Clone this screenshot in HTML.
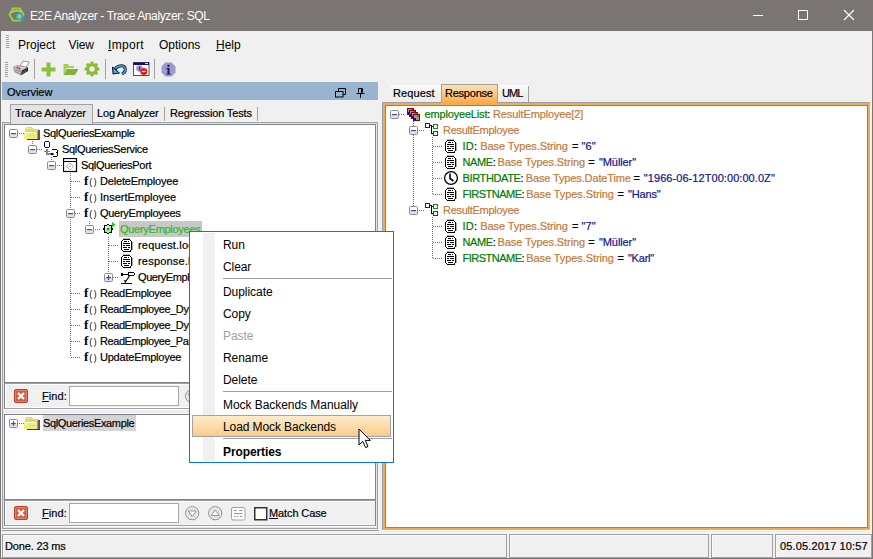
<!DOCTYPE html><html><head><meta charset="utf-8"><style>
html,body{margin:0;padding:0;}
body{width:873px;height:559px;position:relative;overflow:hidden;background:#f0f0f0;font-family:"Liberation Sans",sans-serif;}
body div, body svg{position:absolute;}
.t11{font-size:11px;line-height:16px;white-space:pre;color:#000;-webkit-text-stroke:0.2px currentColor;}
.t12{font-size:12px;line-height:16px;white-space:pre;color:#000;}
.u{text-decoration:underline;}
</style></head><body>
<div style="left:0px;top:0px;width:873px;height:31px;background:#7a7472"></div>
<svg style="left:8px;top:7px;" width="18" height="16" viewBox="0 0 18 16"><path d="M5 1.5 L12 1.5 L15.5 7.5 L12 13.5 L5 13.5 L1.5 7.5 Z" fill="none" stroke="#9bcf3a" stroke-width="2"/>
<path d="M3 6 Q8 2 13 5" fill="none" stroke="#b6d84a" stroke-width="1.5"/>
<circle cx="11.5" cy="9.5" r="3" fill="#a8d040" stroke="#2aa0e0" stroke-width="1.6"/>
<path d="M13.6 11.6 L16 14" stroke="#2aa0e0" stroke-width="1.8"/></svg>
<div class="t12" style="left:30px;top:1px;color:#fff;line-height:31px;letter-spacing:-0.39px;">E2E Analyzer - Trace Analyzer: SQL</div>
<div style="left:753px;top:15px;width:10px;height:1px;background:#fff"></div>
<div style="left:798px;top:10px;width:8px;height:8px;border:1px solid #fff"></div>
<svg style="left:843px;top:9px;" width="12" height="12" viewBox="0 0 12 12"><path d="M1 1 L11 11 M11 1 L1 11" stroke="#fff" stroke-width="1.1"/></svg>
<div style="left:0px;top:31px;width:1px;height:528px;background:#7a7472"></div>
<div style="left:872px;top:31px;width:1px;height:528px;background:#7a7472"></div>
<div style="left:0px;top:558px;width:873px;height:1px;background:#7a7472"></div>
<div style="left:6px;top:35px;width:3px;height:1px;background:#a89ca8"></div>
<div style="left:6px;top:37px;width:3px;height:1px;background:#a89ca8"></div>
<div style="left:6px;top:39px;width:3px;height:1px;background:#a89ca8"></div>
<div style="left:6px;top:41px;width:3px;height:1px;background:#a89ca8"></div>
<div style="left:6px;top:43px;width:3px;height:1px;background:#a89ca8"></div>
<div style="left:6px;top:45px;width:3px;height:1px;background:#a89ca8"></div>
<div style="left:6px;top:47px;width:3px;height:1px;background:#a89ca8"></div>
<div class="t12" style="left:18px;top:37px;letter-spacing:0px;">Project</div>
<div class="t12" style="left:68.5px;top:37px;letter-spacing:-0.1px;">View</div>
<div class="t12" style="left:108px;top:37px;letter-spacing:0.3px;"><span class="u">I</span>mport</div>
<div class="t12" style="left:159px;top:37px;letter-spacing:0px;">Options</div>
<div class="t12" style="left:216px;top:37px;letter-spacing:0px;"><span class="u">H</span>elp</div>
<div style="left:5px;top:62px;width:3px;height:1px;background:#a89ca8"></div>
<div style="left:5px;top:64px;width:3px;height:1px;background:#a89ca8"></div>
<div style="left:5px;top:66px;width:3px;height:1px;background:#a89ca8"></div>
<div style="left:5px;top:68px;width:3px;height:1px;background:#a89ca8"></div>
<div style="left:5px;top:70px;width:3px;height:1px;background:#a89ca8"></div>
<div style="left:5px;top:72px;width:3px;height:1px;background:#a89ca8"></div>
<div style="left:5px;top:74px;width:3px;height:1px;background:#a89ca8"></div>
<div style="left:5px;top:76px;width:3px;height:1px;background:#a89ca8"></div>
<div style="left:34px;top:59px;width:1px;height:20px;background:#a0a0a0"></div>
<div style="left:105px;top:59px;width:1px;height:20px;background:#a0a0a0"></div>
<div style="left:154px;top:59px;width:1px;height:20px;background:#a0a0a0"></div>
<svg style="left:10px;top:58px;" width="22" height="22" viewBox="0 0 22 22"><path d="M13 3 L19 4 L16 9.5 L10 8.5 Z" fill="#fff" stroke="#8a8a8a" stroke-width="0.9"/>
<path d="M3 9.5 L8 7.5 L18 9.5 L12 12.5 Z" fill="#d6d6d6" stroke="#8a8a8a" stroke-width="0.8"/>
<path d="M3 9.5 L12 12.5 L10.5 17.5 L4 14 Z" fill="#bcbcbc"/>
<path d="M4 11.5 L11 14 M4.5 13.5 L10.5 16" stroke="#8a8a8a" stroke-width="0.9"/>
<path d="M12 12.5 L18 9.5 L18 13 L10.5 17.5 Z" fill="#111"/>
<path d="M11.5 14.5 L17.5 11 M11 16 L17 12.5" stroke="#777" stroke-width="0.7"/>
<circle cx="7.5" cy="9.5" r="0.9" fill="#f01010"/><circle cx="9.5" cy="10.5" r="0.9" fill="#f01010"/></svg>
<svg style="left:41px;top:62px;" width="15" height="15" viewBox="0 0 15 15"><path d="M5.5 0.5 h4 v5 h5 v4 h-5 v5 h-4 v-5 h-5 v-4 h5 z" fill="#8cbf3c"/></svg>
<svg style="left:63px;top:63px;" width="16" height="13" viewBox="0 0 16 13"><path d="M0.5 1 L5 1 L6 3 L11 3 L11 5 L4 5 L0.5 12 Z" fill="#a9cf4e"/>
<path d="M4 6 L15.5 6 L12 12 L0.5 12 Z" fill="#7fb23a"/></svg>
<svg style="left:84px;top:61px;" width="17" height="17" viewBox="0 0 17 17"><g fill="#8cbb36"><circle cx="8" cy="8" r="5.8"/>
<rect x="6.3" y="0.6" width="3.4" height="14.8" rx="1.2"/><rect x="0.6" y="6.3" width="14.8" height="3.4" rx="1.2"/>
<rect x="6.3" y="0.6" width="3.4" height="14.8" rx="1.2" transform="rotate(45 8 8)"/><rect x="6.3" y="0.6" width="3.4" height="14.8" rx="1.2" transform="rotate(-45 8 8)"/></g>
<circle cx="8" cy="8" r="2.7" fill="#f0f0f0"/></svg>
<svg style="left:112px;top:63px;" width="15" height="12" viewBox="0 0 15 12"><path d="M3 9 C2 3 11 1 13 5 C14 8 12 10 10 11" fill="none" stroke="#111" stroke-width="3"/>
<path d="M3 9 C2 3 11 1 13 5 C14 8 12 10 10 11" fill="none" stroke="#39a8f0" stroke-width="1.5"/>
<path d="M0.5 4 L1 11 L7.5 10 Z" fill="#39a8f0" stroke="#111" stroke-width="1"/></svg>
<svg style="left:133px;top:62px;" width="17" height="14" viewBox="0 0 17 14"><rect x="0.5" y="0.5" width="15.5" height="13" fill="#fff" stroke="#555"/>
<rect x="0.5" y="0.5" width="15.5" height="2.5" fill="#101060"/>
<rect x="12" y="1.2" width="3" height="0.8" fill="#fff"/>
<circle cx="6.5" cy="6.5" r="3.3" fill="#9a9ad0"/>
<rect x="6" y="4.5" width="1.2" height="4" fill="#303070"/>
<circle cx="10.8" cy="9.5" r="3.5" fill="#e01818"/>
<path d="M9 9.5 h3.6" stroke="#fff" stroke-width="1.2"/></svg>
<svg style="left:161px;top:62px;" width="15" height="15" viewBox="0 0 15 15"><path d="M4.4 0.5 L10.6 0.5 L14.5 4.4 L14.5 10.6 L10.6 14.5 L4.4 14.5 L0.5 10.6 L0.5 4.4 Z" fill="#9b9bcd"/>
<rect x="6.5" y="2.8" width="2" height="2" fill="#1a1a50"/>
<path d="M5.5 6 h3 v5.5 h1 v1 h-4 v-1 h1 v-4.5 h-1 z" fill="#1a1a50"/></svg>
<div style="left:2px;top:82px;width:376px;height:18px;background:#99b4d1"></div>
<div class="t11" style="left:7px;top:84px;letter-spacing:-0.07px;">Overview</div>
<svg style="left:335px;top:88px;" width="11" height="10" viewBox="0 0 11 10"><path d="M3.5 3 V0.5 H10.5 V6.5 H8" fill="none" stroke="#000" stroke-width="1"/><rect x="0.5" y="3.5" width="7.5" height="5.5" fill="none" stroke="#000" stroke-width="1"/></svg>
<svg style="left:356px;top:88px;" width="9" height="10" viewBox="0 0 9 10"><path d="M2.5 0.5 H6.5 V4.5 M2.5 0.5 V4.5" fill="none" stroke="#000"/><path d="M0.5 5.5 H8.5" stroke="#000"/><path d="M4.5 5.5 V10" stroke="#000"/><rect x="5" y="1" width="1" height="4" fill="#000"/></svg>
<div class="t11" style="left:97px;top:105px;letter-spacing:-0.18px;">Log Analyzer</div>
<div style="left:164px;top:107px;width:1px;height:15px;background:#a0a0a0"></div>
<div class="t11" style="left:170px;top:105px;letter-spacing:-0.15px;">Regression Tests</div>
<div style="left:257px;top:107px;width:1px;height:15px;background:#a0a0a0"></div>
<div style="left:1px;top:121px;width:378px;height:409px;background:#f4f4f4"></div>
<div style="left:2px;top:122px;width:374px;height:405px;background:#e3e3e3;border:1px solid #a0a0a0"></div>
<div style="left:10px;top:104px;width:81px;height:19px;background:#e3e3e3;border:1px solid #a0a0a0;border-bottom:none"></div>
<div class="t11" style="left:15px;top:105px;letter-spacing:-0.154px;">Trace Analyzer</div>
<div style="left:4px;top:124px;width:372px;height:285px;background:#f0f0f0;border-left:1px solid #7d8593;border-top:1px solid #7d8593;border-right:1px solid #7d8593;border-bottom:1px solid #a0a0a0;box-sizing:border-box"></div>
<div style="left:5px;top:125px;width:370px;height:257px;background:#fff"></div>
<div style="left:5px;top:382px;width:370px;height:1px;background:#7d8593"></div>
<div style="left:5px;top:383px;width:370px;height:1px;background:#a0a0a0"></div>
<div style="left:5px;top:384px;width:370px;height:1px;background:#fff"></div>
<div style="left:5px;top:384px;width:1px;height:24px;background:#fff"></div>
<div style="left:5px;top:407px;width:370px;height:1px;background:#fff"></div>
<div style="left:4px;top:409px;width:372px;height:5px;background:#eeeeee"></div>
<div style="left:4px;top:409px;width:372px;height:1px;background:#fff"></div>
<div style="left:4px;top:413px;width:372px;height:1px;background:#f5f5f5"></div>
<div style="left:4px;top:414px;width:372px;height:112px;background:#f0f0f0;border-left:1px solid #7d8593;border-top:1px solid #7d8593;border-right:1px solid #7d8593;border-bottom:1px solid #a0a0a0;box-sizing:border-box"></div>
<div style="left:5px;top:415px;width:370px;height:84px;background:#fff"></div>
<div style="left:5px;top:499px;width:370px;height:1px;background:#7d8593"></div>
<div style="left:5px;top:500px;width:370px;height:1px;background:#a0a0a0"></div>
<div style="left:5px;top:501px;width:370px;height:1px;background:#fff"></div>
<div style="left:5px;top:501px;width:1px;height:24px;background:#fff"></div>
<div style="left:5px;top:524px;width:370px;height:1px;background:#f5f5f5"></div>
<div style="left:4px;top:526px;width:372px;height:1px;background:#fff"></div>
<div style="left:3px;top:527px;width:374px;height:1px;background:#e8e8e8"></div>
<div style="left:2px;top:530px;width:377px;height:1px;background:#a0a0a0"></div>
<div style="left:382px;top:102px;width:488px;height:428px;background:#fff"></div>
<div style="left:382px;top:102px;width:488px;height:1px;background:#9aa0a8"></div>
<div style="left:382px;top:102px;width:1px;height:428px;background:#9aa0a8"></div>
<div style="left:383px;top:103px;width:487px;height:427px;background:#f9a94a"></div>
<div style="left:385px;top:105px;width:483px;height:423px;background:#fff;border:1px solid #7d8593;box-sizing:border-box"></div>
<div style="left:870px;top:102px;width:1px;height:429px;background:#fff"></div>
<div style="left:382px;top:530px;width:489px;height:1px;background:#fff"></div>
<div style="left:391px;top:85px;width:50px;height:17px;background:linear-gradient(#fcfcfc,#f0f0f0 45%,#ececec)"></div>
<div class="t11" style="left:393px;top:84px;letter-spacing:0.1px;line-height:18px;">Request</div>
<div style="left:441px;top:84px;width:57px;height:19px;background:linear-gradient(#fde2b6,#f9b45c 85%,#f9a94a);border-left:1px solid #a0a0a0;border-top:1px solid #a0a0a0;border-right:1px solid #a0a0a0;box-sizing:border-box"></div>
<div class="t11" style="left:445px;top:84px;letter-spacing:-0.23px;line-height:18px;">Response</div>
<div style="left:498px;top:85px;width:31px;height:17px;background:linear-gradient(#fcfcfc,#f0f0f0 45%,#ececec)"></div>
<div class="t11" style="left:502px;top:84px;letter-spacing:-0.9px;line-height:18px;">UML</div>
<div style="left:528px;top:86px;width:1px;height:16px;background:#a0a0a0"></div>
<div style="left:382px;top:102px;width:59px;height:1px;background:#9aa0a8"></div>
<svg style="left:32px;top:140px;" width="1" height="9" viewBox="0 0 1 9"><rect x="0" y="1" width="1" height="1" fill="#6e6e6e"/><rect x="0" y="3" width="1" height="1" fill="#6e6e6e"/><rect x="0" y="5" width="1" height="1" fill="#6e6e6e"/><rect x="0" y="7" width="1" height="1" fill="#6e6e6e"/></svg>
<svg style="left:51px;top:156px;" width="1" height="9" viewBox="0 0 1 9"><rect x="0" y="1" width="1" height="1" fill="#6e6e6e"/><rect x="0" y="3" width="1" height="1" fill="#6e6e6e"/><rect x="0" y="5" width="1" height="1" fill="#6e6e6e"/><rect x="0" y="7" width="1" height="1" fill="#6e6e6e"/></svg>
<svg style="left:70px;top:172px;" width="1" height="185" viewBox="0 0 1 185"><rect x="0" y="1" width="1" height="1" fill="#6e6e6e"/><rect x="0" y="3" width="1" height="1" fill="#6e6e6e"/><rect x="0" y="5" width="1" height="1" fill="#6e6e6e"/><rect x="0" y="7" width="1" height="1" fill="#6e6e6e"/><rect x="0" y="9" width="1" height="1" fill="#6e6e6e"/><rect x="0" y="11" width="1" height="1" fill="#6e6e6e"/><rect x="0" y="13" width="1" height="1" fill="#6e6e6e"/><rect x="0" y="15" width="1" height="1" fill="#6e6e6e"/><rect x="0" y="17" width="1" height="1" fill="#6e6e6e"/><rect x="0" y="19" width="1" height="1" fill="#6e6e6e"/><rect x="0" y="21" width="1" height="1" fill="#6e6e6e"/><rect x="0" y="23" width="1" height="1" fill="#6e6e6e"/><rect x="0" y="25" width="1" height="1" fill="#6e6e6e"/><rect x="0" y="27" width="1" height="1" fill="#6e6e6e"/><rect x="0" y="29" width="1" height="1" fill="#6e6e6e"/><rect x="0" y="31" width="1" height="1" fill="#6e6e6e"/><rect x="0" y="33" width="1" height="1" fill="#6e6e6e"/><rect x="0" y="35" width="1" height="1" fill="#6e6e6e"/><rect x="0" y="37" width="1" height="1" fill="#6e6e6e"/><rect x="0" y="39" width="1" height="1" fill="#6e6e6e"/><rect x="0" y="41" width="1" height="1" fill="#6e6e6e"/><rect x="0" y="43" width="1" height="1" fill="#6e6e6e"/><rect x="0" y="45" width="1" height="1" fill="#6e6e6e"/><rect x="0" y="47" width="1" height="1" fill="#6e6e6e"/><rect x="0" y="49" width="1" height="1" fill="#6e6e6e"/><rect x="0" y="51" width="1" height="1" fill="#6e6e6e"/><rect x="0" y="53" width="1" height="1" fill="#6e6e6e"/><rect x="0" y="55" width="1" height="1" fill="#6e6e6e"/><rect x="0" y="57" width="1" height="1" fill="#6e6e6e"/><rect x="0" y="59" width="1" height="1" fill="#6e6e6e"/><rect x="0" y="61" width="1" height="1" fill="#6e6e6e"/><rect x="0" y="63" width="1" height="1" fill="#6e6e6e"/><rect x="0" y="65" width="1" height="1" fill="#6e6e6e"/><rect x="0" y="67" width="1" height="1" fill="#6e6e6e"/><rect x="0" y="69" width="1" height="1" fill="#6e6e6e"/><rect x="0" y="71" width="1" height="1" fill="#6e6e6e"/><rect x="0" y="73" width="1" height="1" fill="#6e6e6e"/><rect x="0" y="75" width="1" height="1" fill="#6e6e6e"/><rect x="0" y="77" width="1" height="1" fill="#6e6e6e"/><rect x="0" y="79" width="1" height="1" fill="#6e6e6e"/><rect x="0" y="81" width="1" height="1" fill="#6e6e6e"/><rect x="0" y="83" width="1" height="1" fill="#6e6e6e"/><rect x="0" y="85" width="1" height="1" fill="#6e6e6e"/><rect x="0" y="87" width="1" height="1" fill="#6e6e6e"/><rect x="0" y="89" width="1" height="1" fill="#6e6e6e"/><rect x="0" y="91" width="1" height="1" fill="#6e6e6e"/><rect x="0" y="93" width="1" height="1" fill="#6e6e6e"/><rect x="0" y="95" width="1" height="1" fill="#6e6e6e"/><rect x="0" y="97" width="1" height="1" fill="#6e6e6e"/><rect x="0" y="99" width="1" height="1" fill="#6e6e6e"/><rect x="0" y="101" width="1" height="1" fill="#6e6e6e"/><rect x="0" y="103" width="1" height="1" fill="#6e6e6e"/><rect x="0" y="105" width="1" height="1" fill="#6e6e6e"/><rect x="0" y="107" width="1" height="1" fill="#6e6e6e"/><rect x="0" y="109" width="1" height="1" fill="#6e6e6e"/><rect x="0" y="111" width="1" height="1" fill="#6e6e6e"/><rect x="0" y="113" width="1" height="1" fill="#6e6e6e"/><rect x="0" y="115" width="1" height="1" fill="#6e6e6e"/><rect x="0" y="117" width="1" height="1" fill="#6e6e6e"/><rect x="0" y="119" width="1" height="1" fill="#6e6e6e"/><rect x="0" y="121" width="1" height="1" fill="#6e6e6e"/><rect x="0" y="123" width="1" height="1" fill="#6e6e6e"/><rect x="0" y="125" width="1" height="1" fill="#6e6e6e"/><rect x="0" y="127" width="1" height="1" fill="#6e6e6e"/><rect x="0" y="129" width="1" height="1" fill="#6e6e6e"/><rect x="0" y="131" width="1" height="1" fill="#6e6e6e"/><rect x="0" y="133" width="1" height="1" fill="#6e6e6e"/><rect x="0" y="135" width="1" height="1" fill="#6e6e6e"/><rect x="0" y="137" width="1" height="1" fill="#6e6e6e"/><rect x="0" y="139" width="1" height="1" fill="#6e6e6e"/><rect x="0" y="141" width="1" height="1" fill="#6e6e6e"/><rect x="0" y="143" width="1" height="1" fill="#6e6e6e"/><rect x="0" y="145" width="1" height="1" fill="#6e6e6e"/><rect x="0" y="147" width="1" height="1" fill="#6e6e6e"/><rect x="0" y="149" width="1" height="1" fill="#6e6e6e"/><rect x="0" y="151" width="1" height="1" fill="#6e6e6e"/><rect x="0" y="153" width="1" height="1" fill="#6e6e6e"/><rect x="0" y="155" width="1" height="1" fill="#6e6e6e"/><rect x="0" y="157" width="1" height="1" fill="#6e6e6e"/><rect x="0" y="159" width="1" height="1" fill="#6e6e6e"/><rect x="0" y="161" width="1" height="1" fill="#6e6e6e"/><rect x="0" y="163" width="1" height="1" fill="#6e6e6e"/><rect x="0" y="165" width="1" height="1" fill="#6e6e6e"/><rect x="0" y="167" width="1" height="1" fill="#6e6e6e"/><rect x="0" y="169" width="1" height="1" fill="#6e6e6e"/><rect x="0" y="171" width="1" height="1" fill="#6e6e6e"/><rect x="0" y="173" width="1" height="1" fill="#6e6e6e"/><rect x="0" y="175" width="1" height="1" fill="#6e6e6e"/><rect x="0" y="177" width="1" height="1" fill="#6e6e6e"/><rect x="0" y="179" width="1" height="1" fill="#6e6e6e"/><rect x="0" y="181" width="1" height="1" fill="#6e6e6e"/><rect x="0" y="183" width="1" height="1" fill="#6e6e6e"/></svg>
<svg style="left:89px;top:220px;" width="1" height="9" viewBox="0 0 1 9"><rect x="0" y="1" width="1" height="1" fill="#6e6e6e"/><rect x="0" y="3" width="1" height="1" fill="#6e6e6e"/><rect x="0" y="5" width="1" height="1" fill="#6e6e6e"/><rect x="0" y="7" width="1" height="1" fill="#6e6e6e"/></svg>
<svg style="left:108px;top:236px;" width="1" height="41" viewBox="0 0 1 41"><rect x="0" y="1" width="1" height="1" fill="#6e6e6e"/><rect x="0" y="3" width="1" height="1" fill="#6e6e6e"/><rect x="0" y="5" width="1" height="1" fill="#6e6e6e"/><rect x="0" y="7" width="1" height="1" fill="#6e6e6e"/><rect x="0" y="9" width="1" height="1" fill="#6e6e6e"/><rect x="0" y="11" width="1" height="1" fill="#6e6e6e"/><rect x="0" y="13" width="1" height="1" fill="#6e6e6e"/><rect x="0" y="15" width="1" height="1" fill="#6e6e6e"/><rect x="0" y="17" width="1" height="1" fill="#6e6e6e"/><rect x="0" y="19" width="1" height="1" fill="#6e6e6e"/><rect x="0" y="21" width="1" height="1" fill="#6e6e6e"/><rect x="0" y="23" width="1" height="1" fill="#6e6e6e"/><rect x="0" y="25" width="1" height="1" fill="#6e6e6e"/><rect x="0" y="27" width="1" height="1" fill="#6e6e6e"/><rect x="0" y="29" width="1" height="1" fill="#6e6e6e"/><rect x="0" y="31" width="1" height="1" fill="#6e6e6e"/><rect x="0" y="33" width="1" height="1" fill="#6e6e6e"/><rect x="0" y="35" width="1" height="1" fill="#6e6e6e"/><rect x="0" y="37" width="1" height="1" fill="#6e6e6e"/><rect x="0" y="39" width="1" height="1" fill="#6e6e6e"/></svg>
<svg style="left:14px;top:133px;" width="10" height="1" viewBox="0 0 10 1"><rect x="1" y="0" width="1" height="1" fill="#6e6e6e"/><rect x="3" y="0" width="1" height="1" fill="#6e6e6e"/><rect x="5" y="0" width="1" height="1" fill="#6e6e6e"/><rect x="7" y="0" width="1" height="1" fill="#6e6e6e"/><rect x="9" y="0" width="1" height="1" fill="#6e6e6e"/></svg>
<svg style="left:9px;top:129px;" width="9" height="9" viewBox="0 0 9 9"><g><rect x="0.5" y="0.5" width="8" height="8" rx="1.2" fill="#fff" stroke="#8a8a8a"/><rect x="1" y="4.5" width="7" height="3.5" fill="#e2e2e2"/><rect x="2" y="4" width="5" height="1.2" fill="#3a52b0"/></g></svg>
<svg style="left:33px;top:149px;" width="10" height="1" viewBox="0 0 10 1"><rect x="0" y="0" width="1" height="1" fill="#6e6e6e"/><rect x="2" y="0" width="1" height="1" fill="#6e6e6e"/><rect x="4" y="0" width="1" height="1" fill="#6e6e6e"/><rect x="6" y="0" width="1" height="1" fill="#6e6e6e"/><rect x="8" y="0" width="1" height="1" fill="#6e6e6e"/></svg>
<svg style="left:28px;top:145px;" width="9" height="9" viewBox="0 0 9 9"><g><rect x="0.5" y="0.5" width="8" height="8" rx="1.2" fill="#fff" stroke="#8a8a8a"/><rect x="1" y="4.5" width="7" height="3.5" fill="#e2e2e2"/><rect x="2" y="4" width="5" height="1.2" fill="#3a52b0"/></g></svg>
<svg style="left:52px;top:165px;" width="10" height="1" viewBox="0 0 10 1"><rect x="1" y="0" width="1" height="1" fill="#6e6e6e"/><rect x="3" y="0" width="1" height="1" fill="#6e6e6e"/><rect x="5" y="0" width="1" height="1" fill="#6e6e6e"/><rect x="7" y="0" width="1" height="1" fill="#6e6e6e"/><rect x="9" y="0" width="1" height="1" fill="#6e6e6e"/></svg>
<svg style="left:47px;top:161px;" width="9" height="9" viewBox="0 0 9 9"><g><rect x="0.5" y="0.5" width="8" height="8" rx="1.2" fill="#fff" stroke="#8a8a8a"/><rect x="1" y="4.5" width="7" height="3.5" fill="#e2e2e2"/><rect x="2" y="4" width="5" height="1.2" fill="#3a52b0"/></g></svg>
<svg style="left:71px;top:181px;" width="10" height="1" viewBox="0 0 10 1"><rect x="0" y="0" width="1" height="1" fill="#6e6e6e"/><rect x="2" y="0" width="1" height="1" fill="#6e6e6e"/><rect x="4" y="0" width="1" height="1" fill="#6e6e6e"/><rect x="6" y="0" width="1" height="1" fill="#6e6e6e"/><rect x="8" y="0" width="1" height="1" fill="#6e6e6e"/></svg>
<svg style="left:71px;top:197px;" width="10" height="1" viewBox="0 0 10 1"><rect x="0" y="0" width="1" height="1" fill="#6e6e6e"/><rect x="2" y="0" width="1" height="1" fill="#6e6e6e"/><rect x="4" y="0" width="1" height="1" fill="#6e6e6e"/><rect x="6" y="0" width="1" height="1" fill="#6e6e6e"/><rect x="8" y="0" width="1" height="1" fill="#6e6e6e"/></svg>
<svg style="left:71px;top:213px;" width="10" height="1" viewBox="0 0 10 1"><rect x="0" y="0" width="1" height="1" fill="#6e6e6e"/><rect x="2" y="0" width="1" height="1" fill="#6e6e6e"/><rect x="4" y="0" width="1" height="1" fill="#6e6e6e"/><rect x="6" y="0" width="1" height="1" fill="#6e6e6e"/><rect x="8" y="0" width="1" height="1" fill="#6e6e6e"/></svg>
<svg style="left:66px;top:209px;" width="9" height="9" viewBox="0 0 9 9"><g><rect x="0.5" y="0.5" width="8" height="8" rx="1.2" fill="#fff" stroke="#8a8a8a"/><rect x="1" y="4.5" width="7" height="3.5" fill="#e2e2e2"/><rect x="2" y="4" width="5" height="1.2" fill="#3a52b0"/></g></svg>
<svg style="left:90px;top:229px;" width="10" height="1" viewBox="0 0 10 1"><rect x="1" y="0" width="1" height="1" fill="#6e6e6e"/><rect x="3" y="0" width="1" height="1" fill="#6e6e6e"/><rect x="5" y="0" width="1" height="1" fill="#6e6e6e"/><rect x="7" y="0" width="1" height="1" fill="#6e6e6e"/><rect x="9" y="0" width="1" height="1" fill="#6e6e6e"/></svg>
<svg style="left:85px;top:225px;" width="9" height="9" viewBox="0 0 9 9"><g><rect x="0.5" y="0.5" width="8" height="8" rx="1.2" fill="#fff" stroke="#8a8a8a"/><rect x="1" y="4.5" width="7" height="3.5" fill="#e2e2e2"/><rect x="2" y="4" width="5" height="1.2" fill="#3a52b0"/></g></svg>
<svg style="left:109px;top:245px;" width="10" height="1" viewBox="0 0 10 1"><rect x="0" y="0" width="1" height="1" fill="#6e6e6e"/><rect x="2" y="0" width="1" height="1" fill="#6e6e6e"/><rect x="4" y="0" width="1" height="1" fill="#6e6e6e"/><rect x="6" y="0" width="1" height="1" fill="#6e6e6e"/><rect x="8" y="0" width="1" height="1" fill="#6e6e6e"/></svg>
<svg style="left:109px;top:261px;" width="10" height="1" viewBox="0 0 10 1"><rect x="0" y="0" width="1" height="1" fill="#6e6e6e"/><rect x="2" y="0" width="1" height="1" fill="#6e6e6e"/><rect x="4" y="0" width="1" height="1" fill="#6e6e6e"/><rect x="6" y="0" width="1" height="1" fill="#6e6e6e"/><rect x="8" y="0" width="1" height="1" fill="#6e6e6e"/></svg>
<svg style="left:109px;top:277px;" width="10" height="1" viewBox="0 0 10 1"><rect x="0" y="0" width="1" height="1" fill="#6e6e6e"/><rect x="2" y="0" width="1" height="1" fill="#6e6e6e"/><rect x="4" y="0" width="1" height="1" fill="#6e6e6e"/><rect x="6" y="0" width="1" height="1" fill="#6e6e6e"/><rect x="8" y="0" width="1" height="1" fill="#6e6e6e"/></svg>
<svg style="left:104px;top:273px;" width="9" height="9" viewBox="0 0 9 9"><g><rect x="0.5" y="0.5" width="8" height="8" rx="1.2" fill="#fff" stroke="#8a8a8a"/><rect x="1" y="4.5" width="7" height="3.5" fill="#e2e2e2"/><rect x="2" y="4" width="5" height="1.2" fill="#3a52b0"/></g><rect x="3.9" y="2" width="1.2" height="5" fill="#3a52b0"/></svg>
<svg style="left:71px;top:293px;" width="10" height="1" viewBox="0 0 10 1"><rect x="0" y="0" width="1" height="1" fill="#6e6e6e"/><rect x="2" y="0" width="1" height="1" fill="#6e6e6e"/><rect x="4" y="0" width="1" height="1" fill="#6e6e6e"/><rect x="6" y="0" width="1" height="1" fill="#6e6e6e"/><rect x="8" y="0" width="1" height="1" fill="#6e6e6e"/></svg>
<svg style="left:71px;top:309px;" width="10" height="1" viewBox="0 0 10 1"><rect x="0" y="0" width="1" height="1" fill="#6e6e6e"/><rect x="2" y="0" width="1" height="1" fill="#6e6e6e"/><rect x="4" y="0" width="1" height="1" fill="#6e6e6e"/><rect x="6" y="0" width="1" height="1" fill="#6e6e6e"/><rect x="8" y="0" width="1" height="1" fill="#6e6e6e"/></svg>
<svg style="left:71px;top:325px;" width="10" height="1" viewBox="0 0 10 1"><rect x="0" y="0" width="1" height="1" fill="#6e6e6e"/><rect x="2" y="0" width="1" height="1" fill="#6e6e6e"/><rect x="4" y="0" width="1" height="1" fill="#6e6e6e"/><rect x="6" y="0" width="1" height="1" fill="#6e6e6e"/><rect x="8" y="0" width="1" height="1" fill="#6e6e6e"/></svg>
<svg style="left:71px;top:341px;" width="10" height="1" viewBox="0 0 10 1"><rect x="0" y="0" width="1" height="1" fill="#6e6e6e"/><rect x="2" y="0" width="1" height="1" fill="#6e6e6e"/><rect x="4" y="0" width="1" height="1" fill="#6e6e6e"/><rect x="6" y="0" width="1" height="1" fill="#6e6e6e"/><rect x="8" y="0" width="1" height="1" fill="#6e6e6e"/></svg>
<svg style="left:71px;top:357px;" width="10" height="1" viewBox="0 0 10 1"><rect x="0" y="0" width="1" height="1" fill="#6e6e6e"/><rect x="2" y="0" width="1" height="1" fill="#6e6e6e"/><rect x="4" y="0" width="1" height="1" fill="#6e6e6e"/><rect x="6" y="0" width="1" height="1" fill="#6e6e6e"/><rect x="8" y="0" width="1" height="1" fill="#6e6e6e"/></svg>
<svg style="left:24px;top:127px;" width="17" height="14" viewBox="0 0 17 14"><g shape-rendering="crispEdges"><path d="M1 3 V1 L2 0 H7 L9 2 H15 V12 H1 Z" fill="#dedb6c"/><rect x="1" y="1" width="6" height="1" fill="#eeea90"/><rect x="0" y="5" width="14" height="7" fill="#efec7c"/><rect x="1" y="5" width="11" height="1" fill="#fbfbf0"/><rect x="1" y="6" width="1" height="5" fill="#f4f4d0"/><rect x="14" y="3" width="2" height="10" fill="#5a5a60"/><rect x="3" y="12" width="13" height="1" fill="#3a3a3a"/><rect x="13" y="4" width="1" height="8" fill="#a8a450"/><rect x="6" y="8" width="1" height="1" fill="#c8c460"/><rect x="9" y="8" width="1" height="1" fill="#c8c460"/></g></svg>
<div class="t11" style="left:43px;top:125px;letter-spacing:-0.33px;">SqlQueriesExample</div>
<svg style="left:43px;top:140px;" width="16" height="18" viewBox="0 0 16 18"><g shape-rendering="crispEdges"><g fill="#0000b0"><rect x="2" y="1" width="4" height="1"/><rect x="2" y="7" width="4" height="1"/><rect x="1" y="2" width="1" height="5"/><rect x="6" y="2" width="1" height="5"/></g><g fill="#858585"><rect x="1" y="11" width="6" height="1"/><rect x="3" y="9" width="2" height="6"/><rect x="3" y="13" width="8" height="2"/></g><g fill="#000"><rect x="8" y="13" width="2" height="2"/><rect x="9" y="9" width="5" height="1"/><rect x="14" y="10" width="1" height="6"/><rect x="13" y="12" width="1" height="1"/><rect x="10" y="16" width="4" height="1"/></g></g></svg>
<div class="t11" style="left:62px;top:141px;letter-spacing:-0.31px;">SqlQueriesService</div>
<svg style="left:63px;top:158px;" width="15" height="15" viewBox="0 0 15 15"><rect x="0.5" y="0.5" width="13" height="13" fill="#fff" stroke="#000" stroke-width="1.2"/><path d="M0.5 3.5 H13.5" stroke="#000" stroke-width="1"/><path d="M7 5 L10.5 8.5 L7 12 L3.5 8.5 Z" fill="none" stroke="#4040ff" stroke-width="0.8" stroke-dasharray="1 0.6"/><circle cx="7" cy="8.5" r="0.6" fill="#208020"/></svg>
<div class="t11" style="left:81px;top:157px;letter-spacing:-0.31px;">SqlQueriesPort</div>
<svg style="left:82px;top:175px;" width="15" height="12" viewBox="0 0 15 12"><g><text x="2" y="10" font-family="Liberation Serif" font-weight="bold" font-size="13">f</text><text x="7.3" y="10" font-family="Liberation Sans" font-size="8.5" letter-spacing="1.6">()</text></g></svg>
<div class="t11" style="left:100px;top:173px;letter-spacing:-0.185px;">DeleteEmployee</div>
<svg style="left:82px;top:191px;" width="15" height="12" viewBox="0 0 15 12"><g><text x="2" y="10" font-family="Liberation Serif" font-weight="bold" font-size="13">f</text><text x="7.3" y="10" font-family="Liberation Sans" font-size="8.5" letter-spacing="1.6">()</text></g></svg>
<div class="t11" style="left:100px;top:189px;letter-spacing:-0.015px;">InsertEmployee</div>
<svg style="left:82px;top:207px;" width="15" height="12" viewBox="0 0 15 12"><g><text x="2" y="10" font-family="Liberation Serif" font-weight="bold" font-size="13">f</text><text x="7.3" y="10" font-family="Liberation Sans" font-size="8.5" letter-spacing="1.6">()</text></g></svg>
<div class="t11" style="left:100px;top:205px;letter-spacing:-0.277px;">QueryEmployees</div>
<svg style="left:103px;top:222px;" width="14" height="12" viewBox="0 0 14 12"><g shape-rendering="crispEdges"><rect x="4" y="2" width="1" height="1" fill="#000"/><rect x="5" y="2" width="1" height="1" fill="#000"/><rect x="1" y="3" width="1" height="1" fill="#000"/><rect x="2" y="3" width="1" height="1" fill="#000"/><rect x="3" y="3" width="1" height="1" fill="#000"/><rect x="4" y="3" width="1" height="1" fill="#d4f7d4"/><rect x="5" y="3" width="1" height="1" fill="#d4f7d4"/><rect x="6" y="3" width="1" height="1" fill="#000"/><rect x="7" y="3" width="1" height="1" fill="#000"/><rect x="8" y="3" width="1" height="1" fill="#000"/><rect x="1" y="4" width="1" height="1" fill="#000"/><rect x="2" y="4" width="1" height="1" fill="#d4f7d4"/><rect x="3" y="4" width="1" height="1" fill="#d4f7d4"/><rect x="4" y="4" width="1" height="1" fill="#d4f7d4"/><rect x="5" y="4" width="1" height="1" fill="#d4f7d4"/><rect x="6" y="4" width="1" height="1" fill="#a6eaa6"/><rect x="7" y="4" width="1" height="1" fill="#a6eaa6"/><rect x="8" y="4" width="1" height="1" fill="#000"/><rect x="1" y="5" width="1" height="1" fill="#000"/><rect x="2" y="5" width="1" height="1" fill="#d4f7d4"/><rect x="3" y="5" width="1" height="1" fill="#d4f7d4"/><rect x="4" y="5" width="1" height="1" fill="#a6eaa6"/><rect x="5" y="5" width="1" height="1" fill="#a6eaa6"/><rect x="6" y="5" width="1" height="1" fill="#a6eaa6"/><rect x="7" y="5" width="1" height="1" fill="#a6eaa6"/><rect x="8" y="5" width="1" height="1" fill="#000"/><rect x="0" y="6" width="1" height="1" fill="#000"/><rect x="1" y="6" width="1" height="1" fill="#000"/><rect x="2" y="6" width="1" height="1" fill="#d4f7d4"/><rect x="3" y="6" width="1" height="1" fill="#d4f7d4"/><rect x="4" y="6" width="1" height="1" fill="#10a010"/><rect x="5" y="6" width="1" height="1" fill="#10a010"/><rect x="6" y="6" width="1" height="1" fill="#a6eaa6"/><rect x="7" y="6" width="1" height="1" fill="#a6eaa6"/><rect x="8" y="6" width="1" height="1" fill="#000"/><rect x="9" y="6" width="1" height="1" fill="#000"/><rect x="0" y="7" width="1" height="1" fill="#000"/><rect x="1" y="7" width="1" height="1" fill="#000"/><rect x="2" y="7" width="1" height="1" fill="#a6eaa6"/><rect x="3" y="7" width="1" height="1" fill="#a6eaa6"/><rect x="4" y="7" width="1" height="1" fill="#10a010"/><rect x="5" y="7" width="1" height="1" fill="#10a010"/><rect x="6" y="7" width="1" height="1" fill="#a6eaa6"/><rect x="7" y="7" width="1" height="1" fill="#a6eaa6"/><rect x="8" y="7" width="1" height="1" fill="#000"/><rect x="9" y="7" width="1" height="1" fill="#000"/><rect x="1" y="8" width="1" height="1" fill="#000"/><rect x="2" y="8" width="1" height="1" fill="#a6eaa6"/><rect x="3" y="8" width="1" height="1" fill="#a6eaa6"/><rect x="4" y="8" width="1" height="1" fill="#a6eaa6"/><rect x="5" y="8" width="1" height="1" fill="#a6eaa6"/><rect x="6" y="8" width="1" height="1" fill="#a6eaa6"/><rect x="7" y="8" width="1" height="1" fill="#a6eaa6"/><rect x="8" y="8" width="1" height="1" fill="#000"/><rect x="1" y="9" width="1" height="1" fill="#000"/><rect x="2" y="9" width="1" height="1" fill="#a6eaa6"/><rect x="3" y="9" width="1" height="1" fill="#a6eaa6"/><rect x="4" y="9" width="1" height="1" fill="#a6eaa6"/><rect x="5" y="9" width="1" height="1" fill="#a6eaa6"/><rect x="6" y="9" width="1" height="1" fill="#a6eaa6"/><rect x="7" y="9" width="1" height="1" fill="#a6eaa6"/><rect x="8" y="9" width="1" height="1" fill="#000"/><rect x="1" y="10" width="1" height="1" fill="#000"/><rect x="2" y="10" width="1" height="1" fill="#000"/><rect x="3" y="10" width="1" height="1" fill="#000"/><rect x="4" y="10" width="1" height="1" fill="#a6eaa6"/><rect x="5" y="10" width="1" height="1" fill="#a6eaa6"/><rect x="6" y="10" width="1" height="1" fill="#000"/><rect x="7" y="10" width="1" height="1" fill="#000"/><rect x="8" y="10" width="1" height="1" fill="#000"/><rect x="4" y="11" width="1" height="1" fill="#000"/><rect x="5" y="11" width="1" height="1" fill="#000"/></g><path d="M9 0 L12.5 2.5 L9 5.5 Z" fill="#10d010"/></svg>
<div style="left:119px;top:221px;width:83px;height:16px;background:#c8c8c8"></div>
<div class="t11" style="left:120px;top:221px;letter-spacing:-0.277px;color:#20c020;">QueryEmployees</div>
<svg style="left:121px;top:238px;" width="12" height="14" viewBox="0 0 12 14"><g shape-rendering="crispEdges" fill="#000"><rect x="2" y="1" width="7" height="1"/><rect x="2" y="0" width="7" height="1" fill="#bbb"/><rect x="1" y="2" width="1" height="1"/><rect x="9" y="2" width="1" height="1"/><rect x="0" y="3" width="1" height="9"/><rect x="10" y="3" width="1" height="9"/><rect x="11" y="4" width="1" height="8" fill="#aaa"/><rect x="1" y="12" width="1" height="1"/><rect x="9" y="12" width="1" height="1"/><rect x="2" y="13" width="8" height="1"/><rect x="3" y="3" width="3" height="1"/><rect x="7" y="3" width="1" height="1"/><rect x="2" y="5" width="7" height="1"/><rect x="2" y="7" width="2" height="1"/><rect x="5" y="7" width="4" height="1"/><rect x="2" y="9" width="4" height="1"/><rect x="7" y="9" width="2" height="1"/><rect x="3" y="11" width="5" height="1"/></g></svg>
<div class="t11" style="left:138px;top:237px;letter-spacing:0.2px;">request.log</div>
<svg style="left:121px;top:254px;" width="12" height="14" viewBox="0 0 12 14"><g shape-rendering="crispEdges" fill="#000"><rect x="2" y="1" width="7" height="1"/><rect x="2" y="0" width="7" height="1" fill="#bbb"/><rect x="1" y="2" width="1" height="1"/><rect x="9" y="2" width="1" height="1"/><rect x="0" y="3" width="1" height="9"/><rect x="10" y="3" width="1" height="9"/><rect x="11" y="4" width="1" height="8" fill="#aaa"/><rect x="1" y="12" width="1" height="1"/><rect x="9" y="12" width="1" height="1"/><rect x="2" y="13" width="8" height="1"/><rect x="3" y="3" width="3" height="1"/><rect x="7" y="3" width="1" height="1"/><rect x="2" y="5" width="7" height="1"/><rect x="2" y="7" width="2" height="1"/><rect x="5" y="7" width="4" height="1"/><rect x="2" y="9" width="4" height="1"/><rect x="7" y="9" width="2" height="1"/><rect x="3" y="11" width="5" height="1"/></g></svg>
<div class="t11" style="left:138px;top:253px;letter-spacing:0.2px;">response.log</div>
<svg style="left:121px;top:272px;" width="14" height="13" viewBox="0 0 14 13"><g shape-rendering="crispEdges" fill="#000"><rect x="0" y="1" width="2" height="3"/><rect x="2" y="2" width="5" height="1"/><rect x="7" y="0" width="6" height="1"/><rect x="7" y="3" width="6" height="1"/><rect x="7" y="1" width="1" height="2"/><rect x="13" y="1" width="1" height="2"/><rect x="0" y="11" width="11" height="1"/></g><path d="M8.5 4 L4 10.5" stroke="#000" stroke-width="1.2"/><path d="M3 8 L5.5 8.5 L4 11 Z" fill="#000"/></svg>
<div class="t11" style="left:138px;top:269px;letter-spacing:-0.42px;">QueryEmployees_1</div>
<svg style="left:82px;top:287px;" width="15" height="12" viewBox="0 0 15 12"><g><text x="2" y="10" font-family="Liberation Serif" font-weight="bold" font-size="13">f</text><text x="7.3" y="10" font-family="Liberation Sans" font-size="8.5" letter-spacing="1.6">()</text></g></svg>
<div class="t11" style="left:100px;top:285px;letter-spacing:-0.355px;">ReadEmployee</div>
<svg style="left:82px;top:303px;" width="15" height="12" viewBox="0 0 15 12"><g><text x="2" y="10" font-family="Liberation Serif" font-weight="bold" font-size="13">f</text><text x="7.3" y="10" font-family="Liberation Sans" font-size="8.5" letter-spacing="1.6">()</text></g></svg>
<div class="t11" style="left:100px;top:301px;letter-spacing:-0.42px;">ReadEmployee_DynamicSql</div>
<svg style="left:82px;top:319px;" width="15" height="12" viewBox="0 0 15 12"><g><text x="2" y="10" font-family="Liberation Serif" font-weight="bold" font-size="13">f</text><text x="7.3" y="10" font-family="Liberation Sans" font-size="8.5" letter-spacing="1.6">()</text></g></svg>
<div class="t11" style="left:100px;top:317px;letter-spacing:-0.42px;">ReadEmployee_DynamicSql2</div>
<svg style="left:82px;top:335px;" width="15" height="12" viewBox="0 0 15 12"><g><text x="2" y="10" font-family="Liberation Serif" font-weight="bold" font-size="13">f</text><text x="7.3" y="10" font-family="Liberation Sans" font-size="8.5" letter-spacing="1.6">()</text></g></svg>
<div class="t11" style="left:100px;top:333px;letter-spacing:-0.42px;">ReadEmployee_Paging</div>
<svg style="left:82px;top:351px;" width="15" height="12" viewBox="0 0 15 12"><g><text x="2" y="10" font-family="Liberation Serif" font-weight="bold" font-size="13">f</text><text x="7.3" y="10" font-family="Liberation Sans" font-size="8.5" letter-spacing="1.6">()</text></g></svg>
<div class="t11" style="left:100px;top:349px;letter-spacing:-0.223px;">UpdateEmployee</div>
<svg style="left:14px;top:389px;" width="14" height="14" viewBox="0 0 14 14"><rect x="0.5" y="0.5" width="13" height="13" rx="1.5" fill="#dc5a44" stroke="#b8402c"/><rect x="1.5" y="1.5" width="11" height="11" rx="1" fill="none" stroke="#ec8a70" stroke-width="0.8"/><path d="M4 4 L10 10 M10 4 L4 10" stroke="#fff" stroke-width="2.3"/></svg>
<div class="t11" style="left:42px;top:387px;letter-spacing:0.07px;line-height:19px;"><span class="u">F</span>ind:</div>
<div style="left:69px;top:386px;width:108px;height:18px;background:#fff;border:1px solid #a3a8b2"></div>
<svg style="left:185px;top:389px;" width="15" height="15" viewBox="0 0 15 15"><circle cx="7.2" cy="7.2" r="6.6" fill="#e0e0e0" stroke="#8c8c8c"/><circle cx="7.2" cy="7.2" r="5.4" fill="none" stroke="#fafafa" stroke-width="0.8"/><path d="M3.2 5 H11.2 L7.2 10.4 Z" fill="#fff" stroke="#8c8c8c" stroke-width="0.9"/></svg>
<svg style="left:208px;top:389px;" width="15" height="15" viewBox="0 0 15 15"><circle cx="7.2" cy="7.2" r="6.6" fill="#e0e0e0" stroke="#8c8c8c"/><circle cx="7.2" cy="7.2" r="5.4" fill="none" stroke="#fafafa" stroke-width="0.8"/><path d="M3.2 9.6 H11.2 L7.2 4.2 Z" fill="#fff" stroke="#8c8c8c" stroke-width="0.9"/></svg>
<svg style="left:231px;top:390px;" width="15" height="14" viewBox="0 0 15 14"><rect x="0.5" y="0.5" width="13.5" height="12.5" rx="1.5" fill="#fff" stroke="#a0a0a0"/><path d="M3 3.5 h3 M8 3.5 h3.5 M3 6.5 h8.5 M3 9.5 h1.5 M6 9.5 h1.5 M9 9.5 h2.5" stroke="#a890a8" stroke-width="1"/></svg>
<svg style="left:14px;top:506px;" width="14" height="14" viewBox="0 0 14 14"><rect x="0.5" y="0.5" width="13" height="13" rx="1.5" fill="#dc5a44" stroke="#b8402c"/><rect x="1.5" y="1.5" width="11" height="11" rx="1" fill="none" stroke="#ec8a70" stroke-width="0.8"/><path d="M4 4 L10 10 M10 4 L4 10" stroke="#fff" stroke-width="2.3"/></svg>
<div class="t11" style="left:42px;top:504px;letter-spacing:0.07px;line-height:19px;"><span class="u">F</span>ind:</div>
<div style="left:69px;top:503px;width:108px;height:18px;background:#fff;border:1px solid #a3a8b2"></div>
<svg style="left:185px;top:506px;" width="15" height="15" viewBox="0 0 15 15"><circle cx="7.2" cy="7.2" r="6.6" fill="#e0e0e0" stroke="#8c8c8c"/><circle cx="7.2" cy="7.2" r="5.4" fill="none" stroke="#fafafa" stroke-width="0.8"/><path d="M3.2 5 H11.2 L7.2 10.4 Z" fill="#fff" stroke="#8c8c8c" stroke-width="0.9"/></svg>
<svg style="left:208px;top:506px;" width="15" height="15" viewBox="0 0 15 15"><circle cx="7.2" cy="7.2" r="6.6" fill="#e0e0e0" stroke="#8c8c8c"/><circle cx="7.2" cy="7.2" r="5.4" fill="none" stroke="#fafafa" stroke-width="0.8"/><path d="M3.2 9.6 H11.2 L7.2 4.2 Z" fill="#fff" stroke="#8c8c8c" stroke-width="0.9"/></svg>
<svg style="left:231px;top:507px;" width="15" height="14" viewBox="0 0 15 14"><rect x="0.5" y="0.5" width="13.5" height="12.5" rx="1.5" fill="#fff" stroke="#a0a0a0"/><path d="M3 3.5 h3 M8 3.5 h3.5 M3 6.5 h8.5 M3 9.5 h1.5 M6 9.5 h1.5 M9 9.5 h2.5" stroke="#a890a8" stroke-width="1"/></svg>
<svg style="left:254px;top:507px;" width="14" height="14" viewBox="0 0 14 14"><rect x="0.75" y="0.75" width="12" height="12" fill="#fff" stroke="#333" stroke-width="1.5"/></svg>
<div class="t11" style="left:269px;top:504px;letter-spacing:-0.11px;line-height:19px;"><span class="u">M</span>atch Case</div>
<svg style="left:9px;top:419px;" width="9" height="9" viewBox="0 0 9 9"><g><rect x="0.5" y="0.5" width="8" height="8" rx="1.2" fill="#fff" stroke="#8a8a8a"/><rect x="1" y="4.5" width="7" height="3.5" fill="#e2e2e2"/><rect x="2" y="4" width="5" height="1.2" fill="#3a52b0"/></g><rect x="3.9" y="2" width="1.2" height="5" fill="#3a52b0"/></svg>
<svg style="left:14px;top:423px;" width="10" height="1" viewBox="0 0 10 1"><rect x="1" y="0" width="1" height="1" fill="#6e6e6e"/><rect x="3" y="0" width="1" height="1" fill="#6e6e6e"/><rect x="5" y="0" width="1" height="1" fill="#6e6e6e"/><rect x="7" y="0" width="1" height="1" fill="#6e6e6e"/><rect x="9" y="0" width="1" height="1" fill="#6e6e6e"/></svg>
<svg style="left:24px;top:417px;" width="17" height="14" viewBox="0 0 17 14"><g shape-rendering="crispEdges"><path d="M1 3 V1 L2 0 H7 L9 2 H15 V12 H1 Z" fill="#dedb6c"/><rect x="1" y="1" width="6" height="1" fill="#eeea90"/><rect x="0" y="5" width="14" height="7" fill="#efec7c"/><rect x="1" y="5" width="11" height="1" fill="#fbfbf0"/><rect x="1" y="6" width="1" height="5" fill="#f4f4d0"/><rect x="14" y="3" width="2" height="10" fill="#5a5a60"/><rect x="3" y="12" width="13" height="1" fill="#3a3a3a"/><rect x="13" y="4" width="1" height="8" fill="#a8a450"/><rect x="6" y="8" width="1" height="1" fill="#c8c460"/><rect x="9" y="8" width="1" height="1" fill="#c8c460"/></g></svg>
<div style="left:43px;top:415px;width:93px;height:16px;background:#d4d4d4"></div>
<div class="t11" style="left:43px;top:415px;letter-spacing:-0.35px;">SqlQueriesExample</div>
<div style="left:1px;top:531px;width:871px;height:27px;background:#f0f0f0"></div>
<div style="left:1px;top:533px;width:871px;height:1px;background:#f8f8f8"></div>
<div style="left:2px;top:534px;width:505px;height:24px;background:#f0f0f0;border:1px solid #a0a0a0;box-sizing:border-box;box-shadow:inset 1px 1px 0 #fafafa"></div>
<div style="left:509px;top:534px;width:200px;height:24px;background:#f0f0f0;border:1px solid #a0a0a0;box-sizing:border-box;box-shadow:inset 1px 1px 0 #fafafa"></div>
<div style="left:711px;top:534px;width:62px;height:24px;background:#f0f0f0;border:1px solid #a0a0a0;box-sizing:border-box;box-shadow:inset 1px 1px 0 #fafafa"></div>
<div style="left:775px;top:534px;width:97px;height:24px;background:#f0f0f0;border:1px solid #a0a0a0;box-sizing:border-box;box-shadow:inset 1px 1px 0 #fafafa"></div>
<div class="t11" style="left:5px;top:538px;letter-spacing:-0.15px;">Done. 23 ms</div>
<div class="t11" style="left:780px;top:538px;letter-spacing:0.133px;">05.05.2017 10:57</div>
<svg style="left:413px;top:121px;" width="1" height="89" viewBox="0 0 1 89"><rect x="0" y="0" width="1" height="1" fill="#6e6e6e"/><rect x="0" y="2" width="1" height="1" fill="#6e6e6e"/><rect x="0" y="4" width="1" height="1" fill="#6e6e6e"/><rect x="0" y="6" width="1" height="1" fill="#6e6e6e"/><rect x="0" y="8" width="1" height="1" fill="#6e6e6e"/><rect x="0" y="10" width="1" height="1" fill="#6e6e6e"/><rect x="0" y="12" width="1" height="1" fill="#6e6e6e"/><rect x="0" y="14" width="1" height="1" fill="#6e6e6e"/><rect x="0" y="16" width="1" height="1" fill="#6e6e6e"/><rect x="0" y="18" width="1" height="1" fill="#6e6e6e"/><rect x="0" y="20" width="1" height="1" fill="#6e6e6e"/><rect x="0" y="22" width="1" height="1" fill="#6e6e6e"/><rect x="0" y="24" width="1" height="1" fill="#6e6e6e"/><rect x="0" y="26" width="1" height="1" fill="#6e6e6e"/><rect x="0" y="28" width="1" height="1" fill="#6e6e6e"/><rect x="0" y="30" width="1" height="1" fill="#6e6e6e"/><rect x="0" y="32" width="1" height="1" fill="#6e6e6e"/><rect x="0" y="34" width="1" height="1" fill="#6e6e6e"/><rect x="0" y="36" width="1" height="1" fill="#6e6e6e"/><rect x="0" y="38" width="1" height="1" fill="#6e6e6e"/><rect x="0" y="40" width="1" height="1" fill="#6e6e6e"/><rect x="0" y="42" width="1" height="1" fill="#6e6e6e"/><rect x="0" y="44" width="1" height="1" fill="#6e6e6e"/><rect x="0" y="46" width="1" height="1" fill="#6e6e6e"/><rect x="0" y="48" width="1" height="1" fill="#6e6e6e"/><rect x="0" y="50" width="1" height="1" fill="#6e6e6e"/><rect x="0" y="52" width="1" height="1" fill="#6e6e6e"/><rect x="0" y="54" width="1" height="1" fill="#6e6e6e"/><rect x="0" y="56" width="1" height="1" fill="#6e6e6e"/><rect x="0" y="58" width="1" height="1" fill="#6e6e6e"/><rect x="0" y="60" width="1" height="1" fill="#6e6e6e"/><rect x="0" y="62" width="1" height="1" fill="#6e6e6e"/><rect x="0" y="64" width="1" height="1" fill="#6e6e6e"/><rect x="0" y="66" width="1" height="1" fill="#6e6e6e"/><rect x="0" y="68" width="1" height="1" fill="#6e6e6e"/><rect x="0" y="70" width="1" height="1" fill="#6e6e6e"/><rect x="0" y="72" width="1" height="1" fill="#6e6e6e"/><rect x="0" y="74" width="1" height="1" fill="#6e6e6e"/><rect x="0" y="76" width="1" height="1" fill="#6e6e6e"/><rect x="0" y="78" width="1" height="1" fill="#6e6e6e"/><rect x="0" y="80" width="1" height="1" fill="#6e6e6e"/><rect x="0" y="82" width="1" height="1" fill="#6e6e6e"/><rect x="0" y="84" width="1" height="1" fill="#6e6e6e"/><rect x="0" y="86" width="1" height="1" fill="#6e6e6e"/><rect x="0" y="88" width="1" height="1" fill="#6e6e6e"/></svg>
<svg style="left:432px;top:137px;" width="1" height="57" viewBox="0 0 1 57"><rect x="0" y="0" width="1" height="1" fill="#6e6e6e"/><rect x="0" y="2" width="1" height="1" fill="#6e6e6e"/><rect x="0" y="4" width="1" height="1" fill="#6e6e6e"/><rect x="0" y="6" width="1" height="1" fill="#6e6e6e"/><rect x="0" y="8" width="1" height="1" fill="#6e6e6e"/><rect x="0" y="10" width="1" height="1" fill="#6e6e6e"/><rect x="0" y="12" width="1" height="1" fill="#6e6e6e"/><rect x="0" y="14" width="1" height="1" fill="#6e6e6e"/><rect x="0" y="16" width="1" height="1" fill="#6e6e6e"/><rect x="0" y="18" width="1" height="1" fill="#6e6e6e"/><rect x="0" y="20" width="1" height="1" fill="#6e6e6e"/><rect x="0" y="22" width="1" height="1" fill="#6e6e6e"/><rect x="0" y="24" width="1" height="1" fill="#6e6e6e"/><rect x="0" y="26" width="1" height="1" fill="#6e6e6e"/><rect x="0" y="28" width="1" height="1" fill="#6e6e6e"/><rect x="0" y="30" width="1" height="1" fill="#6e6e6e"/><rect x="0" y="32" width="1" height="1" fill="#6e6e6e"/><rect x="0" y="34" width="1" height="1" fill="#6e6e6e"/><rect x="0" y="36" width="1" height="1" fill="#6e6e6e"/><rect x="0" y="38" width="1" height="1" fill="#6e6e6e"/><rect x="0" y="40" width="1" height="1" fill="#6e6e6e"/><rect x="0" y="42" width="1" height="1" fill="#6e6e6e"/><rect x="0" y="44" width="1" height="1" fill="#6e6e6e"/><rect x="0" y="46" width="1" height="1" fill="#6e6e6e"/><rect x="0" y="48" width="1" height="1" fill="#6e6e6e"/><rect x="0" y="50" width="1" height="1" fill="#6e6e6e"/><rect x="0" y="52" width="1" height="1" fill="#6e6e6e"/><rect x="0" y="54" width="1" height="1" fill="#6e6e6e"/><rect x="0" y="56" width="1" height="1" fill="#6e6e6e"/></svg>
<svg style="left:432px;top:217px;" width="1" height="41" viewBox="0 0 1 41"><rect x="0" y="0" width="1" height="1" fill="#6e6e6e"/><rect x="0" y="2" width="1" height="1" fill="#6e6e6e"/><rect x="0" y="4" width="1" height="1" fill="#6e6e6e"/><rect x="0" y="6" width="1" height="1" fill="#6e6e6e"/><rect x="0" y="8" width="1" height="1" fill="#6e6e6e"/><rect x="0" y="10" width="1" height="1" fill="#6e6e6e"/><rect x="0" y="12" width="1" height="1" fill="#6e6e6e"/><rect x="0" y="14" width="1" height="1" fill="#6e6e6e"/><rect x="0" y="16" width="1" height="1" fill="#6e6e6e"/><rect x="0" y="18" width="1" height="1" fill="#6e6e6e"/><rect x="0" y="20" width="1" height="1" fill="#6e6e6e"/><rect x="0" y="22" width="1" height="1" fill="#6e6e6e"/><rect x="0" y="24" width="1" height="1" fill="#6e6e6e"/><rect x="0" y="26" width="1" height="1" fill="#6e6e6e"/><rect x="0" y="28" width="1" height="1" fill="#6e6e6e"/><rect x="0" y="30" width="1" height="1" fill="#6e6e6e"/><rect x="0" y="32" width="1" height="1" fill="#6e6e6e"/><rect x="0" y="34" width="1" height="1" fill="#6e6e6e"/><rect x="0" y="36" width="1" height="1" fill="#6e6e6e"/><rect x="0" y="38" width="1" height="1" fill="#6e6e6e"/><rect x="0" y="40" width="1" height="1" fill="#6e6e6e"/></svg>
<svg style="left:395px;top:114px;" width="10" height="1" viewBox="0 0 10 1"><rect x="0" y="0" width="1" height="1" fill="#6e6e6e"/><rect x="2" y="0" width="1" height="1" fill="#6e6e6e"/><rect x="4" y="0" width="1" height="1" fill="#6e6e6e"/><rect x="6" y="0" width="1" height="1" fill="#6e6e6e"/><rect x="8" y="0" width="1" height="1" fill="#6e6e6e"/></svg>
<svg style="left:390px;top:110px;" width="9" height="9" viewBox="0 0 9 9"><g><rect x="0.5" y="0.5" width="8" height="8" rx="1.2" fill="#fff" stroke="#8a8a8a"/><rect x="1" y="4.5" width="7" height="3.5" fill="#e2e2e2"/><rect x="2" y="4" width="5" height="1.2" fill="#3a52b0"/></g></svg>
<svg style="left:414px;top:130px;" width="10" height="1" viewBox="0 0 10 1"><rect x="1" y="0" width="1" height="1" fill="#6e6e6e"/><rect x="3" y="0" width="1" height="1" fill="#6e6e6e"/><rect x="5" y="0" width="1" height="1" fill="#6e6e6e"/><rect x="7" y="0" width="1" height="1" fill="#6e6e6e"/><rect x="9" y="0" width="1" height="1" fill="#6e6e6e"/></svg>
<svg style="left:409px;top:126px;" width="9" height="9" viewBox="0 0 9 9"><g><rect x="0.5" y="0.5" width="8" height="8" rx="1.2" fill="#fff" stroke="#8a8a8a"/><rect x="1" y="4.5" width="7" height="3.5" fill="#e2e2e2"/><rect x="2" y="4" width="5" height="1.2" fill="#3a52b0"/></g></svg>
<svg style="left:433px;top:146px;" width="10" height="1" viewBox="0 0 10 1"><rect x="0" y="0" width="1" height="1" fill="#6e6e6e"/><rect x="2" y="0" width="1" height="1" fill="#6e6e6e"/><rect x="4" y="0" width="1" height="1" fill="#6e6e6e"/><rect x="6" y="0" width="1" height="1" fill="#6e6e6e"/><rect x="8" y="0" width="1" height="1" fill="#6e6e6e"/></svg>
<svg style="left:433px;top:162px;" width="10" height="1" viewBox="0 0 10 1"><rect x="0" y="0" width="1" height="1" fill="#6e6e6e"/><rect x="2" y="0" width="1" height="1" fill="#6e6e6e"/><rect x="4" y="0" width="1" height="1" fill="#6e6e6e"/><rect x="6" y="0" width="1" height="1" fill="#6e6e6e"/><rect x="8" y="0" width="1" height="1" fill="#6e6e6e"/></svg>
<svg style="left:433px;top:178px;" width="10" height="1" viewBox="0 0 10 1"><rect x="0" y="0" width="1" height="1" fill="#6e6e6e"/><rect x="2" y="0" width="1" height="1" fill="#6e6e6e"/><rect x="4" y="0" width="1" height="1" fill="#6e6e6e"/><rect x="6" y="0" width="1" height="1" fill="#6e6e6e"/><rect x="8" y="0" width="1" height="1" fill="#6e6e6e"/></svg>
<svg style="left:433px;top:194px;" width="10" height="1" viewBox="0 0 10 1"><rect x="0" y="0" width="1" height="1" fill="#6e6e6e"/><rect x="2" y="0" width="1" height="1" fill="#6e6e6e"/><rect x="4" y="0" width="1" height="1" fill="#6e6e6e"/><rect x="6" y="0" width="1" height="1" fill="#6e6e6e"/><rect x="8" y="0" width="1" height="1" fill="#6e6e6e"/></svg>
<svg style="left:414px;top:210px;" width="10" height="1" viewBox="0 0 10 1"><rect x="1" y="0" width="1" height="1" fill="#6e6e6e"/><rect x="3" y="0" width="1" height="1" fill="#6e6e6e"/><rect x="5" y="0" width="1" height="1" fill="#6e6e6e"/><rect x="7" y="0" width="1" height="1" fill="#6e6e6e"/><rect x="9" y="0" width="1" height="1" fill="#6e6e6e"/></svg>
<svg style="left:409px;top:206px;" width="9" height="9" viewBox="0 0 9 9"><g><rect x="0.5" y="0.5" width="8" height="8" rx="1.2" fill="#fff" stroke="#8a8a8a"/><rect x="1" y="4.5" width="7" height="3.5" fill="#e2e2e2"/><rect x="2" y="4" width="5" height="1.2" fill="#3a52b0"/></g></svg>
<svg style="left:433px;top:226px;" width="10" height="1" viewBox="0 0 10 1"><rect x="0" y="0" width="1" height="1" fill="#6e6e6e"/><rect x="2" y="0" width="1" height="1" fill="#6e6e6e"/><rect x="4" y="0" width="1" height="1" fill="#6e6e6e"/><rect x="6" y="0" width="1" height="1" fill="#6e6e6e"/><rect x="8" y="0" width="1" height="1" fill="#6e6e6e"/></svg>
<svg style="left:433px;top:242px;" width="10" height="1" viewBox="0 0 10 1"><rect x="0" y="0" width="1" height="1" fill="#6e6e6e"/><rect x="2" y="0" width="1" height="1" fill="#6e6e6e"/><rect x="4" y="0" width="1" height="1" fill="#6e6e6e"/><rect x="6" y="0" width="1" height="1" fill="#6e6e6e"/><rect x="8" y="0" width="1" height="1" fill="#6e6e6e"/></svg>
<svg style="left:433px;top:258px;" width="10" height="1" viewBox="0 0 10 1"><rect x="0" y="0" width="1" height="1" fill="#6e6e6e"/><rect x="2" y="0" width="1" height="1" fill="#6e6e6e"/><rect x="4" y="0" width="1" height="1" fill="#6e6e6e"/><rect x="6" y="0" width="1" height="1" fill="#6e6e6e"/><rect x="8" y="0" width="1" height="1" fill="#6e6e6e"/></svg>
<svg style="left:407px;top:108px;" width="14" height="14" viewBox="0 0 14 14"><g shape-rendering="crispEdges"><rect x="0" y="0" width="7" height="7" fill="#8b0000"/><rect x="1" y="1" width="5" height="5" fill="#9a9a9a"/><rect x="4" y="1" width="2" height="2" fill="#10a010"/><rect x="1" y="4" width="2" height="2" fill="#1010a0"/><rect x="2" y="2" width="7" height="7" fill="#8b0000"/><rect x="3" y="3" width="5" height="5" fill="#9a9a9a"/><rect x="6" y="3" width="2" height="2" fill="#10a010"/><rect x="3" y="6" width="2" height="2" fill="#1010a0"/><rect x="4" y="4" width="7" height="7" fill="#8b0000"/><rect x="5" y="5" width="5" height="5" fill="#9a9a9a"/><rect x="8" y="5" width="2" height="2" fill="#10a010"/><rect x="5" y="8" width="2" height="2" fill="#1010a0"/><rect x="6" y="6" width="7" height="7" fill="#8b0000"/><rect x="7" y="7" width="5" height="5" fill="#9a9a9a"/><rect x="10" y="7" width="2" height="2" fill="#10a010"/><rect x="7" y="10" width="2" height="2" fill="#1010a0"/></g></svg>
<div class="t11" style="left:424.5px;top:106px;color:#007a00;letter-spacing:-0.167px;">employeeList<span style="color:#000">:</span></div>
<div class="t11" style="left:493px;top:106px;color:#c47a3a;letter-spacing:-0.125px;">ResultEmployee[2]</div>
<svg style="left:425px;top:123px;" width="14" height="14" viewBox="0 0 14 14"><g shape-rendering="crispEdges"><rect x="0" y="0" width="5" height="5" fill="#1010b0"/><rect x="1" y="1" width="3" height="3" fill="#fff"/><rect x="8" y="1" width="5" height="5" fill="#109010"/><rect x="9" y="2" width="3" height="3" fill="#fff"/><rect x="8" y="8" width="5" height="5" fill="#a01010"/><rect x="9" y="9" width="3" height="3" fill="#fff"/><rect x="5" y="2" width="2" height="1" fill="#000"/><rect x="6" y="2" width="1" height="9" fill="#000"/><rect x="6" y="3" width="2" height="1" fill="#000"/><rect x="6" y="10" width="2" height="1" fill="#000"/></g></svg>
<div class="t11" style="left:443px;top:122px;color:#c47a3a;letter-spacing:-0.285px;">ResultEmployee</div>
<svg style="left:445px;top:139px;" width="12" height="14" viewBox="0 0 12 14"><g shape-rendering="crispEdges" fill="#000"><rect x="2" y="1" width="7" height="1"/><rect x="2" y="0" width="7" height="1" fill="#bbb"/><rect x="1" y="2" width="1" height="1"/><rect x="9" y="2" width="1" height="1"/><rect x="0" y="3" width="1" height="9"/><rect x="10" y="3" width="1" height="9"/><rect x="11" y="4" width="1" height="8" fill="#aaa"/><rect x="1" y="12" width="1" height="1"/><rect x="9" y="12" width="1" height="1"/><rect x="2" y="13" width="8" height="1"/><rect x="3" y="3" width="3" height="1"/><rect x="7" y="3" width="1" height="1"/><rect x="2" y="5" width="7" height="1"/><rect x="2" y="7" width="2" height="1"/><rect x="5" y="7" width="4" height="1"/><rect x="2" y="9" width="4" height="1"/><rect x="7" y="9" width="2" height="1"/><rect x="3" y="11" width="5" height="1"/></g></svg>
<div class="t11" style="left:462.5px;top:138px;color:#007a00;letter-spacing:0.3px;">ID<span style="color:#000">:</span></div>
<div class="t11" style="left:480.3px;top:138px;color:#c47a3a;letter-spacing:-0.088px;">Base Types.String</div>
<div class="t11" style="left:572px;top:138px;color:#000;letter-spacing:0px;">=</div>
<div class="t11" style="left:581.5px;top:138px;color:#14148a;letter-spacing:0.15px;">"6"</div>
<svg style="left:445px;top:155px;" width="12" height="14" viewBox="0 0 12 14"><g shape-rendering="crispEdges" fill="#000"><rect x="2" y="1" width="7" height="1"/><rect x="2" y="0" width="7" height="1" fill="#bbb"/><rect x="1" y="2" width="1" height="1"/><rect x="9" y="2" width="1" height="1"/><rect x="0" y="3" width="1" height="9"/><rect x="10" y="3" width="1" height="9"/><rect x="11" y="4" width="1" height="8" fill="#aaa"/><rect x="1" y="12" width="1" height="1"/><rect x="9" y="12" width="1" height="1"/><rect x="2" y="13" width="8" height="1"/><rect x="3" y="3" width="3" height="1"/><rect x="7" y="3" width="1" height="1"/><rect x="2" y="5" width="7" height="1"/><rect x="2" y="7" width="2" height="1"/><rect x="5" y="7" width="4" height="1"/><rect x="2" y="9" width="4" height="1"/><rect x="7" y="9" width="2" height="1"/><rect x="3" y="11" width="5" height="1"/></g></svg>
<div class="t11" style="left:462.5px;top:154px;color:#007a00;letter-spacing:-0.4px;">NAME<span style="color:#000">:</span></div>
<div class="t11" style="left:497.5px;top:154px;color:#c47a3a;letter-spacing:-0.088px;">Base Types.String</div>
<div class="t11" style="left:588.3px;top:154px;color:#000;letter-spacing:0px;">=</div>
<div class="t11" style="left:599px;top:154px;color:#14148a;letter-spacing:-0.1px;">"Müller"</div>
<svg style="left:443px;top:170px;" width="16" height="16" viewBox="0 0 16 16"><circle cx="8" cy="8" r="6.4" fill="#fff" stroke="#000" stroke-width="1.3"/><path d="M7 3.5 V8.5 L10.5 11" fill="none" stroke="#000" stroke-width="1.6"/></svg>
<div class="t11" style="left:462.5px;top:170px;color:#007a00;letter-spacing:-0.367px;">BIRTHDATE<span style="color:#000">:</span></div>
<div class="t11" style="left:525.7px;top:170px;color:#c47a3a;letter-spacing:-0.128px;">Base Types.DateTime</div>
<div class="t11" style="left:633.6px;top:170px;color:#000;letter-spacing:0px;">=</div>
<div class="t11" style="left:643.8px;top:170px;color:#14148a;letter-spacing:0.065px;">"1966-06-12T00:00:00.0Z"</div>
<svg style="left:445px;top:187px;" width="12" height="14" viewBox="0 0 12 14"><g shape-rendering="crispEdges" fill="#000"><rect x="2" y="1" width="7" height="1"/><rect x="2" y="0" width="7" height="1" fill="#bbb"/><rect x="1" y="2" width="1" height="1"/><rect x="9" y="2" width="1" height="1"/><rect x="0" y="3" width="1" height="9"/><rect x="10" y="3" width="1" height="9"/><rect x="11" y="4" width="1" height="8" fill="#aaa"/><rect x="1" y="12" width="1" height="1"/><rect x="9" y="12" width="1" height="1"/><rect x="2" y="13" width="8" height="1"/><rect x="3" y="3" width="3" height="1"/><rect x="7" y="3" width="1" height="1"/><rect x="2" y="5" width="7" height="1"/><rect x="2" y="7" width="2" height="1"/><rect x="5" y="7" width="4" height="1"/><rect x="2" y="9" width="4" height="1"/><rect x="7" y="9" width="2" height="1"/><rect x="3" y="11" width="5" height="1"/></g></svg>
<div class="t11" style="left:462.5px;top:186px;color:#007a00;letter-spacing:-0.511px;">FIRSTNAME<span style="color:#000">:</span></div>
<div class="t11" style="left:526.3px;top:186px;color:#c47a3a;letter-spacing:-0.088px;">Base Types.String</div>
<div class="t11" style="left:617.6px;top:186px;color:#000;letter-spacing:0px;">=</div>
<div class="t11" style="left:627.9px;top:186px;color:#14148a;letter-spacing:-0.14px;">"Hans"</div>
<svg style="left:425px;top:203px;" width="14" height="14" viewBox="0 0 14 14"><g shape-rendering="crispEdges"><rect x="0" y="0" width="5" height="5" fill="#1010b0"/><rect x="1" y="1" width="3" height="3" fill="#fff"/><rect x="8" y="1" width="5" height="5" fill="#109010"/><rect x="9" y="2" width="3" height="3" fill="#fff"/><rect x="8" y="8" width="5" height="5" fill="#a01010"/><rect x="9" y="9" width="3" height="3" fill="#fff"/><rect x="5" y="2" width="2" height="1" fill="#000"/><rect x="6" y="2" width="1" height="9" fill="#000"/><rect x="6" y="3" width="2" height="1" fill="#000"/><rect x="6" y="10" width="2" height="1" fill="#000"/></g></svg>
<div class="t11" style="left:443px;top:202px;color:#c47a3a;letter-spacing:-0.285px;">ResultEmployee</div>
<svg style="left:445px;top:219px;" width="12" height="14" viewBox="0 0 12 14"><g shape-rendering="crispEdges" fill="#000"><rect x="2" y="1" width="7" height="1"/><rect x="2" y="0" width="7" height="1" fill="#bbb"/><rect x="1" y="2" width="1" height="1"/><rect x="9" y="2" width="1" height="1"/><rect x="0" y="3" width="1" height="9"/><rect x="10" y="3" width="1" height="9"/><rect x="11" y="4" width="1" height="8" fill="#aaa"/><rect x="1" y="12" width="1" height="1"/><rect x="9" y="12" width="1" height="1"/><rect x="2" y="13" width="8" height="1"/><rect x="3" y="3" width="3" height="1"/><rect x="7" y="3" width="1" height="1"/><rect x="2" y="5" width="7" height="1"/><rect x="2" y="7" width="2" height="1"/><rect x="5" y="7" width="4" height="1"/><rect x="2" y="9" width="4" height="1"/><rect x="7" y="9" width="2" height="1"/><rect x="3" y="11" width="5" height="1"/></g></svg>
<div class="t11" style="left:462.5px;top:218px;color:#007a00;letter-spacing:0.3px;">ID<span style="color:#000">:</span></div>
<div class="t11" style="left:480.3px;top:218px;color:#c47a3a;letter-spacing:-0.088px;">Base Types.String</div>
<div class="t11" style="left:572px;top:218px;color:#000;letter-spacing:0px;">=</div>
<div class="t11" style="left:581.5px;top:218px;color:#14148a;letter-spacing:0.15px;">"7"</div>
<svg style="left:445px;top:235px;" width="12" height="14" viewBox="0 0 12 14"><g shape-rendering="crispEdges" fill="#000"><rect x="2" y="1" width="7" height="1"/><rect x="2" y="0" width="7" height="1" fill="#bbb"/><rect x="1" y="2" width="1" height="1"/><rect x="9" y="2" width="1" height="1"/><rect x="0" y="3" width="1" height="9"/><rect x="10" y="3" width="1" height="9"/><rect x="11" y="4" width="1" height="8" fill="#aaa"/><rect x="1" y="12" width="1" height="1"/><rect x="9" y="12" width="1" height="1"/><rect x="2" y="13" width="8" height="1"/><rect x="3" y="3" width="3" height="1"/><rect x="7" y="3" width="1" height="1"/><rect x="2" y="5" width="7" height="1"/><rect x="2" y="7" width="2" height="1"/><rect x="5" y="7" width="4" height="1"/><rect x="2" y="9" width="4" height="1"/><rect x="7" y="9" width="2" height="1"/><rect x="3" y="11" width="5" height="1"/></g></svg>
<div class="t11" style="left:462.5px;top:234px;color:#007a00;letter-spacing:-0.4px;">NAME<span style="color:#000">:</span></div>
<div class="t11" style="left:497.5px;top:234px;color:#c47a3a;letter-spacing:-0.088px;">Base Types.String</div>
<div class="t11" style="left:588.3px;top:234px;color:#000;letter-spacing:0px;">=</div>
<div class="t11" style="left:599px;top:234px;color:#14148a;letter-spacing:-0.1px;">"Müller"</div>
<svg style="left:445px;top:251px;" width="12" height="14" viewBox="0 0 12 14"><g shape-rendering="crispEdges" fill="#000"><rect x="2" y="1" width="7" height="1"/><rect x="2" y="0" width="7" height="1" fill="#bbb"/><rect x="1" y="2" width="1" height="1"/><rect x="9" y="2" width="1" height="1"/><rect x="0" y="3" width="1" height="9"/><rect x="10" y="3" width="1" height="9"/><rect x="11" y="4" width="1" height="8" fill="#aaa"/><rect x="1" y="12" width="1" height="1"/><rect x="9" y="12" width="1" height="1"/><rect x="2" y="13" width="8" height="1"/><rect x="3" y="3" width="3" height="1"/><rect x="7" y="3" width="1" height="1"/><rect x="2" y="5" width="7" height="1"/><rect x="2" y="7" width="2" height="1"/><rect x="5" y="7" width="4" height="1"/><rect x="2" y="9" width="4" height="1"/><rect x="7" y="9" width="2" height="1"/><rect x="3" y="11" width="5" height="1"/></g></svg>
<div class="t11" style="left:462.5px;top:250px;color:#007a00;letter-spacing:-0.511px;">FIRSTNAME<span style="color:#000">:</span></div>
<div class="t11" style="left:526.3px;top:250px;color:#c47a3a;letter-spacing:-0.088px;">Base Types.String</div>
<div class="t11" style="left:617.6px;top:250px;color:#000;letter-spacing:0px;">=</div>
<div class="t11" style="left:627.9px;top:250px;color:#14148a;letter-spacing:-0.2px;">"Karl"</div>
<div style="left:189px;top:231px;width:205px;height:232px;background:#fff;border:1px solid #0a78d7;box-sizing:border-box"></div>
<div style="left:203px;top:233px;width:12px;height:228px;background:#f0f0f0"></div>
<div style="left:223px;top:278px;width:169px;height:1px;background:#a0a0a0"></div>
<div style="left:223px;top:391px;width:169px;height:1px;background:#a0a0a0"></div>
<div style="left:223px;top:438px;width:169px;height:1px;background:#a0a0a0"></div>
<div style="left:192px;top:415px;width:199px;height:22px;background:linear-gradient(#fdeccb,#fcdcaa 50%,#fbca8c);border:1px solid #a3a3a3;box-sizing:border-box"></div>
<div class="t12" style="left:223px;top:237px;letter-spacing:-0.1px;">Run</div>
<div class="t12" style="left:223px;top:259px;letter-spacing:-0.1px;">Clear</div>
<div class="t12" style="left:223px;top:284px;letter-spacing:-0.05px;">Duplicate</div>
<div class="t12" style="left:223px;top:306px;letter-spacing:-0.05px;">Copy</div>
<div class="t12" style="left:223px;top:328px;color:#a0a0a0;letter-spacing:-0.05px;">Paste</div>
<div class="t12" style="left:223px;top:350px;letter-spacing:-0.05px;">Rename</div>
<div class="t12" style="left:223px;top:372px;letter-spacing:-0.05px;">Delete</div>
<div class="t12" style="left:223px;top:397px;letter-spacing:-0.05px;">Mock Backends Manually</div>
<div class="t12" style="left:223px;top:419px;letter-spacing:-0.1px;">Load Mock Backends</div>
<div class="t12" style="left:223px;top:444px;font-weight:bold;letter-spacing:-0.1px;">Properties</div>
<svg style="left:358px;top:428px;" width="13" height="21" viewBox="0 0 13 21"><path d="M1 1 V17 L4.8 13.4 L7.6 19.6 L10 18.5 L7.3 12.4 H12.3 Z" fill="#fff" stroke="#000" stroke-width="1" stroke-linejoin="miter"/></svg>
</body></html>
